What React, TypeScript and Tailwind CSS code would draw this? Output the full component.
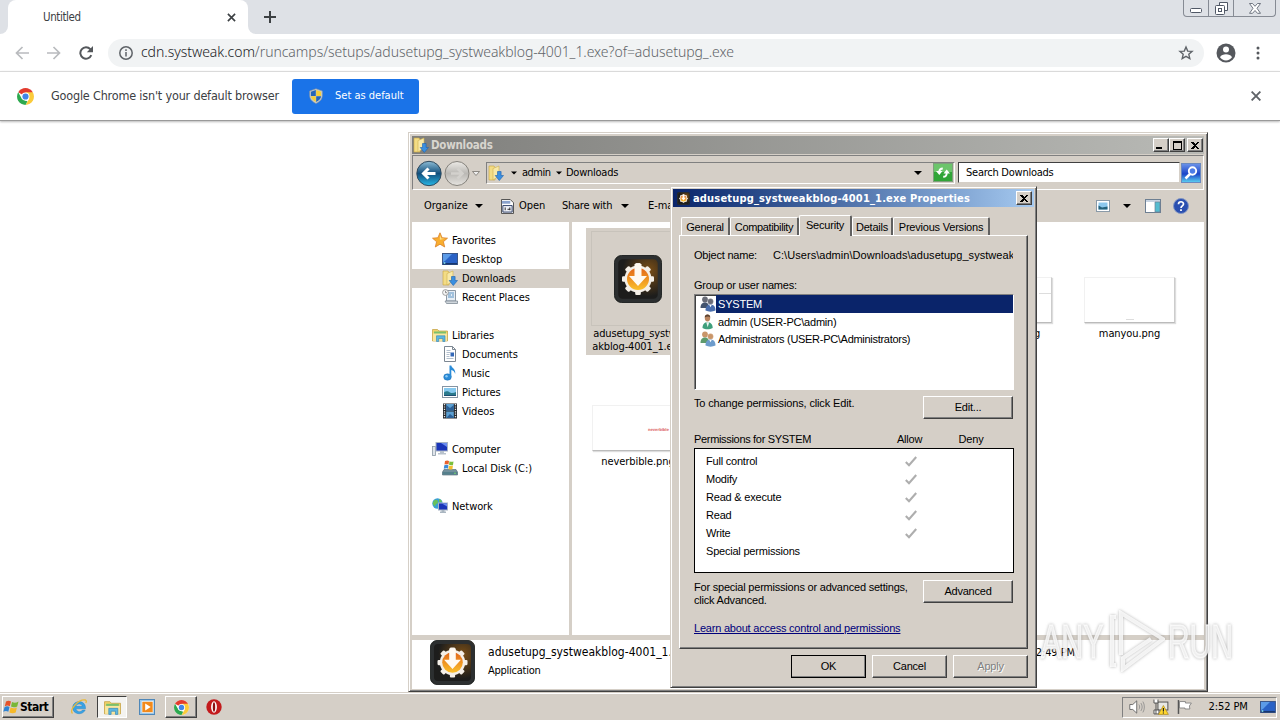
import React from "react";
import type { ReactNode } from "react";

type P = { className?: string };

const raised = "border border-t-white border-l-white border-r-[#404040] border-b-[#404040] shadow-[inset_-1px_-1px_0_#808080] bg-[#d5cfc7]";

function ChromeLogo({ className }: P) {
  return (
    <svg viewBox="0 0 16 16" className={className}>
      <circle cx="8" cy="8" r="8" fill="#fff" />
      <path d="M8 8 1.1 4A8 8 0 0 1 14.9 4Z" fill="#e33b2e" />
      <path d="M8 8V4h6.9A8 8 0 0 1 8 16l3.500-6Z" fill="#fbcb3b" />
      <path d="M1.1 4 4.600 10 8 12l1.800.4L8 16A8 8 0 0 1 1.1 4Z" fill="#2da94f" />
      <circle cx="8" cy="8" r="3.800" fill="#fff" />
      <circle cx="8" cy="8" r="2.900" fill="#4285e8" />
    </svg>
  );
}

function Shield({ className }: P) {
  return (
    <svg viewBox="0 0 16 16" className={className}>
      <path d="M8 .8 14.300 3v4.500c0 3.600-2.500 6.200-6.300 7.900C4.200 13.700 1.700 11.100 1.700 7.500V3Z" fill="#c9ced2" stroke="#8d959b" strokeWidth=".6" />
      <path d="M7.800 2v6H2.900V3.800Z" fill="#2565b8" />
      <path d="M8.200 2v6h4.900V3.800Z" fill="#f4ce3a" />
      <path d="M7.800 8.300v5.700C5 12.500 3.200 10.800 2.900 8.300Z" fill="#f4ce3a" />
      <path d="M8.200 8.300v5.700c2.800-1.500 4.600-3.200 4.900-5.700Z" fill="#2565b8" />
    </svg>
  );
}

function AppIcon({ className }: P) {
  return (
    <svg viewBox="0 0 48 48" className={className}>
      <defs>
        <radialGradient id="appGlow" cx=".72" cy=".32" r=".55">
          <stop offset="0" stopColor="#7a4e16" />
          <stop offset="1" stopColor="#1d1d1c" />
        </radialGradient>
        <linearGradient id="appFill" x1="0" y1="0" x2="0" y2="1">
          <stop offset="0" stopColor="#e2661a" />
          <stop offset="1" stopColor="#fbc02a" />
        </linearGradient>
      </defs>
      <rect x=".5" y=".5" width="47" height="47" rx="7" fill="url(#appGlow)" stroke="#222625" strokeWidth="1" />
      <rect x="2.500" y="2.500" width="43" height="43" rx="6" fill="none" stroke="#2c2f30" strokeWidth="3.500" />
      <g fill="#f4efe8">
        <circle cx="24" cy="24" r="13.500" />
        {[0, 45, 90, 135].map((a) => (
          <rect key={a} x="21.200" y="8" width="5.600" height="32" rx="1.200" transform={`rotate(${a} 24 24)`} />
        ))}
      </g>
      <circle cx="24" cy="24" r="11" fill="url(#appFill)" />
      <path d="M20.500 9h7v12h5.500L24 31l-9-10h5.500Z" fill="#fffaf2" />
    </svg>
  );
}

function FolderDown({ className }: P) {
  return (
    <svg viewBox="0 0 16 16" className={className}>
      <path d="M1 1h5l1 1.500V15H1Z" fill="#f3dc85" stroke="#c9a63c" strokeWidth=".6" />
      <path d="M5 3.500 11 1v10l-6 4Z" fill="#f8e9a8" stroke="#cfae4a" strokeWidth=".6" />
      <path d="M9.500 6.500h3.600v4h2.400L11.300 15.500 7.200 10.500h2.300Z" fill="#3a8fe0" stroke="#1d62ae" strokeWidth=".6" />
    </svg>
  );
}

function StarIcon({ className }: P) {
  return (
    <svg viewBox="0 0 16 16" className={className}>
      <path d="m8 .8 2.100 4.900 5.400.5-4.100 3.500 1.300 5.300L8 12.200 3.300 15l1.300-5.300L.5 6.200l5.400-.5Z" fill="#f9ae2e" stroke="#d9822b" strokeWidth=".8" />
      <path d="m8 3 1.300 3.500 3.500.3-5 1Z" fill="#fde08a" />
    </svg>
  );
}

function DesktopIcon({ className }: P) {
  return (
    <svg viewBox="0 0 16 16" className={className}>
      <rect x=".5" y="2.500" width="15" height="11" fill="#2a62c6" stroke="#3a5688" />
      <path d="M1 3h9L3 10 1 11Z" fill="#5c9be8" />
      <path d="M1 12h14v1.500H1Z" fill="#17376f" />
      <circle cx="2.500" cy="12" r="1" fill="#7bd0e0" />
    </svg>
  );
}

function RecentIcon({ className }: P) {
  return (
    <svg viewBox="0 0 16 16" className={className}>
      <path d="M4.500 1.500h9V12h-9Z" fill="#e7eef5" stroke="#8d99a5" />
      <path d="M6 4h6M6 6h3m1 0h2M6 8h6" stroke="#5b93c4" />
      <path d="M3 12h12.500v2.500H4.500Z" fill="#cfd6dc" stroke="#808b95" strokeWidth=".8" />
      <circle cx="3.500" cy="3.500" r="2.900" fill="#f6f6f6" stroke="#8b8b8b" strokeWidth=".8" />
      <path d="M3.500 1.800v1.900H5" stroke="#666" strokeWidth=".7" fill="none" />
    </svg>
  );
}

function LibraryIcon({ className }: P) {
  return (
    <svg viewBox="0 0 16 16" className={className}>
      <path d="M.5 2.500h5L7 4h8.500v10H.5Z" fill="#f1d36b" stroke="#c29d3c" strokeWidth=".7" />
      <path d="M2 4.500h12v3H2Z" fill="#7cc06c" />
      <path d="M1 6.500h14V14H1Z" fill="#f9e7a0" />
      <path d="M4.500 14.500V8.800h8.500v5.700h-2.200v-3H6.700v3Z" fill="#5db7e2" stroke="#2f84b5" strokeWidth=".6" />
    </svg>
  );
}

function DocIcon({ className }: P) {
  return (
    <svg viewBox="0 0 16 16" className={className}>
      <path d="M2.500.5h8l3 3v12h-11Z" fill="#fff" stroke="#7c8792" />
      <path d="M10.500.5v3h3" fill="none" stroke="#7c8792" />
      <path d="M4.500 4.500h4M4.500 6.500h4M4.500 8.500h3M4.500 10.500h3M4.500 12.500h7" stroke="#9fb0c2" strokeWidth=".8" />
      <path d="M8.500 6.500h3.500v4H8.500Z" fill="#3468b8" />
    </svg>
  );
}

function MusicIcon({ className }: P) {
  return (
    <svg viewBox="0 0 16 16" className={className}>
      <ellipse cx="5.500" cy="12" rx="3.800" ry="3.200" fill="#2b8cd8" stroke="#1a6cb1" strokeWidth=".5" />
      <path d="M7.500 12V.5h1.800c.4 2.500 4.800 3.500 3.900 8.500-.6-2.200-2-3.400-3.900-3.900V12Z" fill="#2b8cd8" />
      <circle cx="4.500" cy="11.200" r="1.200" fill="#8ecbf5" />
    </svg>
  );
}

function PictureIcon({ className }: P) {
  return (
    <svg viewBox="0 0 16 16" className={className}>
      <rect x=".5" y="2.500" width="15" height="11" fill="#fff" stroke="#8594a3" />
      <rect x="2" y="4" width="12" height="8" fill="#86c9ef" />
      <path d="M2 8.500c3-2 4-1 6 0s4 .5 6-.5v4H2Z" fill="#2a7a8c" />
      <path d="M2 11h12v1H2Z" fill="#1d4e73" />
    </svg>
  );
}

function VideoIcon({ className }: P) {
  return (
    <svg viewBox="0 0 16 16" className={className}>
      <rect x="1" y=".5" width="14" height="15" fill="#26292d" />
      <path d="M2.500 1v14M13.500 1v14" stroke="#e8e8e8" strokeWidth="1.300" strokeDasharray="1.200 1.200" />
      <path d="M4.200 1h7.600v6.500H4.200ZM4.200 8.500h7.600V15H4.200Z" fill="#5b9fd2" />
      <path d="M4.200 2 8 5l3.800-3v5.500H4.200ZM4.200 15l3.800-4 3.800 3v1Z" fill="#2b5f96" />
    </svg>
  );
}

function ComputerIcon({ className }: P) {
  return (
    <svg viewBox="0 0 16 16" className={className}>
      <rect x=".5" y="5.500" width="3" height="9" fill="#dfe4ea" stroke="#8b98a5" strokeWidth=".8" />
      <rect x="4" y="1.500" width="11.500" height="8.500" fill="#1a35b8" stroke="#a7b3c4" />
      <path d="M9 2h6v4Z" fill="#6a8cf0" />
      <path d="M8 10h4v2h2v1.500H6V12h2Z" fill="#b8c2cc" />
    </svg>
  );
}

function DiskIcon({ className }: P) {
  return (
    <svg viewBox="0 0 16 16" className={className}>
      <path d="M2 9.500h12l1.500 2.500v3H.5v-3Z" fill="#72909c" stroke="#4a636d" strokeWidth=".6" />
      <path d="M.8 12h14.400v2.500H.8Z" fill="#55808c" />
      <circle cx="13" cy="13.300" r=".8" fill="#7be06c" />
      <path d="M3 1c2-1 3-.5 4 0L6.500 4.500C5.500 4 4 4 2.500 4.500Z" fill="#e8622d" />
      <path d="M7.500 1.200c1.500.8 2.500.8 4 .2L11 5c-1.500.6-2.500.4-4-.2Z" fill="#7bbf3c" />
      <path d="M2.300 5.200c1.500-.7 3-.7 4.100 0L6 8.800c-1.500-.7-2.800-.5-4.200 0Z" fill="#3b8bd8" />
      <path d="M6.900 5.500c1.500.8 2.600.6 4 .1l-.5 3.600c-1.400.5-2.500.5-4-.2Z" fill="#f4be2c" />
    </svg>
  );
}

function NetworkIcon({ className }: P) {
  return (
    <svg viewBox="0 0 16 16" className={className}>
      <circle cx="5.500" cy="5.500" r="5.200" fill="#3a9fd5" />
      <path d="M2 2.500C4 1 6 2 6 4S3 6 3 8.500C1 7 0 5 2 2.500ZM7 1c2 .5 3 2 3 3H7Z" fill="#69c15a" />
      <rect x="6.500" y="5" width="9" height="7" fill="#1a35b8" stroke="#a7b3c4" />
      <path d="M10 5.500h5v3Z" fill="#6a8cf0" />
      <path d="M9.500 12h3v1.500h1.500V15H8v-1.500h1.500Z" fill="#aab6c1" />
    </svg>
  );
}

function Users({ className, a, b, c }: P & { a: string; b: string; c: string }) {
  return (
    <svg viewBox="0 0 16 16" className={className}>
      <circle cx="5" cy="3.500" r="2.900" fill={a} />
      <path d="M.5 12c0-4 2-5.500 4.500-5.500S9 8 9 12Z" fill={b} />
      <circle cx="10.500" cy="5.500" r="2.900" fill={a} stroke="#ffffff66" strokeWidth=".5" />
      <path d="M5.500 14.500c0-4 2-6 5-6s5 2 5 6c-3 1.500-7 1.500-10 0Z" fill={c} />
      <path d="m9.200 8.800 1.300 2.500 1.300-2.500Z" fill="#fff" />
    </svg>
  );
}

function UserIcon({ className }: P) {
  return (
    <svg viewBox="0 0 16 16" className={className}>
      <ellipse cx="7.500" cy="4" rx="2.700" ry="3.400" fill="#b98560" />
      <path d="M4.700 3.500C4.700 1.500 6 .4 7.500.4s2.800 1.100 2.800 3.100C9 2 6.500 2.500 4.700 3.500Z" fill="#5c4432" />
      <path d="M2.500 14c0-4 2-5.800 5-5.800s5.200 1.800 5.200 5.800c-3 1.700-7.500 1.700-10.200 0Z" fill="#3f9f7c" />
      <path d="m6.200 8.200 1.500 5 1.500-5Z" fill="#e8f5f0" />
    </svg>
  );
}

function WinFlag({ className }: P) {
  return (
    <svg viewBox="0 0 17 16" className={className}>
      <path d="M3 2.500C5 1.200 6.500 1.500 8 2.500L6.800 7.200C5.200 6.200 3.700 6.200 1.800 7.200Z" fill="#e5532a" />
      <path d="M9 3c2 1 4 1 6.500-.5L14.200 7.400c-2.200 1.200-4.200 1.200-6.200.2Z" fill="#79b737" />
      <path d="M1.500 8.200c2-1.200 3.500-1 5-.1L5.300 12.800c-1.500-1-3.200-1-5 0Z" fill="#2f83d3" />
      <path d="M7.600 8.600c2 1 4 1 6.300-.2l-1.200 5c-2.200 1.100-4.200 1-6.300 0Z" fill="#f6b92a" />
    </svg>
  );
}

function Caret({ className }: P) {
  return (
    <svg viewBox="0 0 8 4" className={`h-1 shrink-0 ${className ?? "w-2"}`}>
      <path d="M0 0h8L4 4Z" fill="#000" />
    </svg>
  );
}

function CloseGlyph({ className }: P) {
  return (
    <svg viewBox="0 0 8 7" className={className} shapeRendering="crispEdges">
      <path d="M0 0h2l2 2 2-2h2L5 3.500 8 7H6L4 5 2 7H0l3-3.500Z" fill="#000" />
    </svg>
  );
}

function CaptionButton({ children }: { children: ReactNode }) {
  return <div className={`flex h-[14px] w-4 items-center justify-center ${raised}`}>{children}</div>;
}

function Browser() {
  return (
    <header className="flex h-[122px] shrink-0 flex-col text-[#3c4043]">
      <div className="flex h-[34px] bg-[#dee1e6]">
        <div className="w-2 bg-white"><div className="h-full rounded-br-lg bg-[#dee1e6]" /></div>
        <div className="flex w-60 items-center rounded-t-lg bg-white pl-[35px]">
          <span className="w-[184px] pt-[2px] text-[11.500px] tracking-[-0.4px]">Untitled</span>
          <svg viewBox="0 0 10 10" className="size-[9px]"><path d="m1 1 8 8M9 1 1 9" stroke="#3c4043" strokeWidth="1.800" /></svg>
        </div>
        <div className="w-2 bg-white"><div className="h-full rounded-bl-lg bg-[#dee1e6]" /></div>
        <div className="flex flex-1 items-center pl-2">
          <svg viewBox="0 0 12 12" className="size-3"><path d="M6 0v12M0 6h12" stroke="#3c4043" strokeWidth="2" /></svg>
        </div>
        <div className="mr-1 flex h-[17px] w-[93px] rounded-b border border-t-0 border-[#868b94] text-[#505866]">
          <div className="flex w-[25px] items-end justify-center border-r border-[#868b94] pb-[3px]">
            <svg viewBox="0 0 12 5" className="h-[5px] w-3"><rect x=".5" y=".5" width="11" height="4" rx="1" fill="#fff" stroke="currentColor" /></svg>
          </div>
          <div className="flex w-[25px] items-center justify-center border-r border-[#868b94]">
            <svg viewBox="0 0 13 13" className="size-[13px]"><path d="M4.500 3V.5h8v8H10" fill="#fff" stroke="currentColor" /><rect x=".5" y="3.500" width="9" height="9" rx="1" fill="#fff" stroke="currentColor" /><rect x="3.500" y="6.500" width="3" height="3" fill="none" stroke="currentColor" /></svg>
          </div>
          <div className="flex flex-1 items-center justify-center">
            <svg viewBox="0 0 12 11" className="h-[11px] w-3"><path d="M.5.5h3L6 3.300 8.500.5h3L8 5.300l3.500 5h-3L6 7.500 3.500 10.300h-3L4 5.300Z" fill="#fff" stroke="currentColor" strokeWidth=".8" /></svg>
          </div>
        </div>
      </div>
      <div className="flex h-[37px] items-center bg-white">
        <svg viewBox="0 0 14 14" className="ml-[15px] size-[14px]"><path d="M14 7H1.500M7.500 1l-6 6 6 6" fill="none" stroke="#b9bbbe" strokeWidth="1.700" /></svg>
        <svg viewBox="0 0 14 14" className="ml-[18px] size-[14px]"><path d="M0 7h12.500M6.500 1l6 6-6 6" fill="none" stroke="#b9bbbe" strokeWidth="1.700" /></svg>
        <svg viewBox="0 0 14 14" className="ml-[18px] size-[14px]"><path d="M12.300 9.200A5.700 5.700 0 1 1 11.300 3.200L12 4" fill="none" stroke="#55585c" strokeWidth="2" /><path d="M14 0v6.200H7.800Z" fill="#55585c" /></svg>
        <div className="ml-[15px] flex h-7 w-[1096px] items-center rounded-full bg-[#f1f3f4]">
          <svg viewBox="0 0 14 14" className="ml-[11px] size-[14px]"><circle cx="7" cy="7" r="6.200" fill="none" stroke="#5f6368" strokeWidth="1.500" /><path d="M7 6v4.500M7 3.300v1.600" stroke="#5f6368" strokeWidth="1.500" /></svg>
          <span className="ml-2 w-[1037px] pb-[2px] whitespace-nowrap font-['Noto_Sans',sans-serif] text-[14px] font-light tracking-[-0.045px] text-[#5f6368]">
            <span className="text-[#202124]">cdn.systweak.com</span>/runcamps/setups/adusetupg_systweakblog-4001_1.exe?of=adusetupg_.exe
          </span>
          <svg viewBox="0 0 16 16" className="size-4"><path d="m8 2 1.700 4.100 4.400.3-3.300 2.900 1 4.300L8 11.300l-3.800 2.300 1-4.300L1.900 6.400l4.400-.3Z" fill="none" stroke="#5f6368" strokeWidth="1.400" /></svg>
        </div>
        <svg viewBox="0 0 20 20" className="ml-3 size-5"><circle cx="10" cy="10" r="9.500" fill="#55585d" /><circle cx="10" cy="6.500" r="3" fill="#fff" /><path d="M4 14.200c1-2.200 3.500-3 6-3s5 .8 6 3c-1.300 2-3.500 3.200-6 3.200s-4.700-1.200-6-3.200Z" fill="#fff" /></svg>
        <svg viewBox="0 0 4 14" className="ml-5 h-[14px] w-1" fill="#55585d"><circle cx="2" cy="2" r="1.500" /><circle cx="2" cy="7" r="1.500" /><circle cx="2" cy="12" r="1.500" /></svg>
      </div>
      <div className="flex h-[50px] items-center border-t border-b border-t-[#dadada] border-b-[#9a9a9a] bg-white shadow-[0_1px_2px_#bbb]">
        <ChromeLogo className="ml-[17px] size-[17px]" />
        <span className="ml-[17px] w-[241px] whitespace-nowrap text-[12.500px] tracking-[-0.18px]">Google Chrome isn't your default browser</span>
        <div className="flex h-[35px] w-[127px] items-center rounded-[3px] bg-[#1a73e8] text-white">
          <Shield className="ml-4 size-4" />
          <span className="ml-[11px] whitespace-nowrap text-[11px]">Set as default</span>
        </div>
        <svg viewBox="0 0 10 10" className="mr-[19px] ml-auto size-[10px]"><path d="m.6.6 8.800 8.800M9.400.6.6 9.400" stroke="#5f6368" strokeWidth="1.900" /></svg>
      </div>
    </header>
  );
}

const nav: ([string, (p: P) => ReactNode, boolean] | null)[] = [
  ["Favorites", StarIcon, false],
  ["Desktop", DesktopIcon, true],
  ["Downloads", FolderDown, true],
  ["Recent Places", RecentIcon, true],
  null,
  ["Libraries", LibraryIcon, false],
  ["Documents", DocIcon, true],
  ["Music", MusicIcon, true],
  ["Pictures", PictureIcon, true],
  ["Videos", VideoIcon, true],
  null,
  ["Computer", ComputerIcon, false],
  ["Local Disk (C:)", DiskIcon, true],
  null,
  ["Network", NetworkIcon, false],
];

function Thumb({ children }: { children?: ReactNode }) {
  return <div className="h-[46px] w-[91px] border border-[#f1f1f1] border-r-[#ccc] border-b-[#bbb] bg-white shadow-[1px_1px_1px_#ddd]">{children}</div>;
}

function Explorer() {
  return (
    <section className="absolute top-[132px] left-[408px] flex h-[560px] w-[800px] flex-col border border-[#d5cfc7] border-r-[#404040] border-b-[#404040] bg-[#d5cfc7] p-[2px] text-[11px] tracking-[-0.08px] whitespace-nowrap text-black shadow-[inset_1px_1px_0_#fff,inset_-1px_-1px_0_#808080]">
      <div className="mx-px mt-px flex h-[18px] shrink-0 items-center bg-linear-to-r from-[#7f7f7c] to-[#b9bab6] pr-px pl-px">
        <FolderDown className="size-4" />
        <b className="ml-[2px] flex-1 pt-[2px] text-[11.500px] tracking-[-0.25px] text-[#d8d5ce]">Downloads</b>
        <CaptionButton><i className="mt-[6px] mr-1 h-[2px] w-[6px] bg-black" /></CaptionButton>
        <CaptionButton><i className="h-[9px] w-[9px] border border-t-2 border-black" /></CaptionButton>
        <i className="w-[2px]" />
        <CaptionButton><CloseGlyph className="h-[7px] w-2" /></CaptionButton>
      </div>
      <div className="mx-px mt-px flex h-[35px] shrink-0 items-center border border-[#808080] border-r-white border-b-white">
        <svg viewBox="0 0 68 28" className="ml-[3px] h-7 w-[68px]">
          <defs>
            <linearGradient id="backBlue" x1="0" y1="0" x2="0" y2="1"><stop offset="0" stopColor="#8dbdd6" /><stop offset=".5" stopColor="#124f7c" /><stop offset="1" stopColor="#27b8e8" /></linearGradient>
            <linearGradient id="fwdGray" x1="0" y1="0" x2="0" y2="1"><stop offset="0" stopColor="#eceae6" /><stop offset=".5" stopColor="#bab8b4" /><stop offset="1" stopColor="#e6e4e0" /></linearGradient>
          </defs>
          <circle cx="13" cy="14.500" r="12.200" fill="url(#backBlue)" stroke="#30495c" />
          <path d="M19.500 14.500H8M12.500 9.500l-5 5 5 5" fill="none" stroke="#fff" strokeWidth="3" />
          <circle cx="41" cy="14.500" r="12" fill="url(#fwdGray)" stroke="#85827c" />
          <path d="M35 14.500h11M41.500 9.500l5 5-5 5" fill="none" stroke="#d3d1cd" strokeWidth="2.500" />
          <path d="M56.500 12.500h7L60 16.500Z" fill="#eee" stroke="#77736c" strokeWidth=".8" />
        </svg>
        <div className="ml-[2px] flex h-[22px] w-[469px] items-center border border-[#808080] border-r-white border-b-white">
          <FolderDown className="ml-[1px] size-4" />
          <Caret className="ml-[7px] w-[6px]" />
          <span className="ml-[5px] w-[34px] pt-px tracking-[-0.5px]">admin</span>
          <Caret className="w-[6px]" />
          <span className="ml-1 flex-1 pt-px tracking-[-0.25px]">Downloads</span>
          <Caret />
          <svg viewBox="0 0 20 19" className="mr-px ml-[11px] h-[19px] w-5">
            <rect x=".5" y=".5" width="19" height="18" fill="#31a537" stroke="#7f9f7c" />
            <rect x="1" y="1" width="18" height="8" fill="#6cc56b" />
            <path d="M3 8h6.500L6.300 12ZM10.500 10.500H17L13.700 6.500Z" fill="#fff" />
            <path d="M6.300 9c0-2 1-3.500 3.500-3.500M13.700 10c0 2.500-1 3.800-3.500 3.800" fill="none" stroke="#fff" strokeWidth="1.900" />
          </svg>
        </div>
        <div className="ml-[3px] flex h-[21px] w-[222px] items-center border border-t-[#404040] border-l-[#404040] border-r-[#d5cfc7] border-b-[#d5cfc7] bg-white pt-[2px] pl-[7px] tracking-[-0.25px]">Search Downloads</div>
        <svg viewBox="0 0 20 20" className="ml-px size-5">
          <defs><linearGradient id="srch" x1="0" y1="0" x2="0" y2="1"><stop offset="0" stopColor="#6d94ea" /><stop offset=".55" stopColor="#1b45c8" /><stop offset="1" stopColor="#5cd3f2" /></linearGradient></defs>
          <rect x=".5" y=".5" width="19" height="19" fill="url(#srch)" stroke="#6a89c0" />
          <circle cx="11.500" cy="8" r="3.700" fill="#4d7ce6" stroke="#fff" strokeWidth="1.900" />
          <path d="M9 11 4.500 15.500" stroke="#fff" strokeWidth="2.500" />
        </svg>
      </div>
      <div className="flex h-8 shrink-0 items-center pl-[13px]">
        <span className="w-[51px] pt-px">Organize</span><Caret />
        <svg viewBox="0 0 14 16" className="ml-[18px] h-[15px] w-[13px]"><path d="M.5.500H10l3.500 3.500V15.500H.5Z" fill="#fff" stroke="#444" /><path d="M1 2h9v3H1Z" fill="#8aa2cc" /><path d="M2 7h10v7H2Z" fill="#eef1f8" stroke="#26375f" /><path d="M4.500 9v3M7 11h3M9.500 9v3" stroke="#222" /></svg>
        <span className="ml-[5px] w-[43px] pt-px">Open</span>
        <span className="w-[59px] pt-px tracking-[-0.25px]">Share with</span><Caret />
        <span className="ml-[19px] flex-1 pt-px">E-mail</span>
        <svg viewBox="0 0 14 12" className="h-3 w-[14px]"><rect x=".5" y=".5" width="13" height="11" fill="#fff" stroke="#8a9aa8" /><path d="M2.500 2.500h9v7h-9Z" fill="#8cc8ee" /><path d="M2.500 5.500 6 7.500l5.500-1v3h-9Z" fill="#24627c" /></svg>
        <Caret className="ml-[13px] w-2" />
        <svg viewBox="0 0 16 14" className="ml-[14px] h-[14px] w-4"><rect x=".5" y=".5" width="15" height="13" fill="#fff" stroke="#6d7f92" /><path d="M1 1h14v2H1Z" fill="#c8d4e2" /><path d="M10 3h5v10h-5Z" fill="#54bcd0" stroke="#6d7f92" strokeWidth=".7" /></svg>
        <svg viewBox="0 0 16 16" className="mr-4 ml-3 size-4"><circle cx="8" cy="8" r="7.500" fill="#2a4fb0" stroke="#8296c4" /><path d="M5.500 6.200C5.500 3 10.500 3 10.500 6c0 1.900-2.500 1.800-2.500 4" fill="none" stroke="#fff" strokeWidth="1.700" /><path d="M7.100 11.200h1.800V13H7.100Z" fill="#fff" /></svg>
      </div>
      <div className="ml-px flex h-[413px] w-[792px] shrink-0 bg-white">
        <nav className="flex w-[157px] flex-col pt-[9px]">
          {nav.map((row, i) => {
            if (!row) return <div key={i} className="h-[19px]" />;
            const [label, Icon, child] = row;
            return (
              <div key={label} className={`flex h-[19px] items-center ${child ? "pl-[30px]" : "pl-5"} ${label === "Downloads" ? "bg-[#d5cfc7]" : ""}`}>
                <Icon className="mr-1 mb-[2px] size-4" /><span className="pt-[2px]">{label}</span>
              </div>
            );
          })}
        </nav>
        <div className="w-[3px] bg-[#d5cfc7]" />
        <div className="grid auto-rows-[128px] grid-cols-[repeat(5,123px)] content-start overflow-hidden pt-[6px] pl-1 text-center leading-[13px]">
          <div className="ml-[10px] flex h-[127px] w-[104px] flex-col items-center bg-[#d5cfc7]">
            <div className="mt-[3px] flex h-[95px] w-[94px] items-center justify-center border border-[#c8c3bb]"><AppIcon className="size-12" /></div>
            <div className="mt-px tracking-[-0.15px]">adusetupg_systwe<br />akblog-4001_1.exe</div>
          </div>
          <div /><div />
          <div className="flex flex-col items-center pt-[49px]"><Thumb><div className="mt-[15px] ml-auto h-px w-3 bg-[#ddd]" /></Thumb><span className="mt-1">lakelower.png</span></div>
          <div className="flex flex-col items-center pt-[49px]"><Thumb><div className="mx-auto mt-[41px] h-px w-2 bg-[#ddd]" /></Thumb><span className="mt-1">manyou.png</span></div>
          <div className="flex flex-col items-center pt-[49px]"><Thumb><div className="mt-[19px] ml-[55px] text-left text-[4px] leading-[10px] font-bold text-[#e07070]">neverbible</div></Thumb><span className="mt-1 ml-px">neverbible.png</span></div>
        </div>
      </div>
      <div className="h-[5px] shrink-0" />
      <div className="mx-px flex flex-1 bg-white">
        <AppIcon className="ml-[18px] size-[45px]" />
        <div className="ml-[13px] flex flex-col pt-[5px] leading-[14px]">
          <span className="text-[12px] tracking-[0.02px]">adusetupg_systweakblog-4001_1.exe</span>
          <span className="mt-[5px] tracking-[-0.25px]">Application</span>
        </div>
        <span className="mr-[129px] ml-auto pt-[5px]">Date modified: 2:49 PM</span>
      </div>
    </section>
  );
}

function PushButton({ children, className }: P & { children: ReactNode }) {
  return <div className={`flex h-[23px] items-center justify-center ${raised} ${className ?? ""}`}>{children}</div>;
}

function Tab({ children, className }: P & { children: ReactNode }) {
  return <div className={`flex items-center justify-center rounded-t-[2px] border-t border-r-2 border-l border-t-white border-r-[#606060] border-l-white pt-px ${className ?? ""}`}>{children}</div>;
}

function Properties() {
  return (
    <section className="absolute top-[186px] left-[670px] flex h-[502px] w-[367px] flex-col border border-[#d5cfc7] border-r-[#404040] border-b-[#404040] bg-[#d5cfc7] p-[2px] font-['Liberation_Sans',Arial,sans-serif] text-[11px] leading-[13px] tracking-[-0.21px] whitespace-nowrap text-black shadow-[inset_1px_1px_0_#fff,inset_-1px_-1px_0_#808080]">
      <div className="flex h-[18px] shrink-0 items-center bg-linear-to-r from-[#0a246a] to-[#a6caf0] pr-[2px] pl-1 font-['DejaVu_Sans_Condensed','DejaVu_Sans',sans-serif] text-white">
        <AppIcon className="size-[13px]" />
        <b className="ml-[3px] flex-1 text-[11px] tracking-[0.17px]">adusetupg_systweakblog-4001_1.exe Properties</b>
        <CaptionButton><CloseGlyph className="h-[7px] w-2" /></CaptionButton>
      </div>
      <div className="mt-2 ml-[8px] flex h-5 items-end">
        <Tab className="h-[18px] w-[49px]">General</Tab>
        <Tab className="h-[18px] w-[69px] tracking-[-0.35px]">Compatibility</Tab>
        <Tab className="z-10 -mb-px h-[21px] w-[53px] bg-[#d5cfc7] pb-[3px]">Security</Tab>
        <Tab className="h-[18px] w-[41px]">Details</Tab>
        <Tab className="h-[18px] w-[97px] border-r-1">Previous Versions</Tab>
      </div>
      <div className="ml-[6px] flex h-[414px] w-[349px] flex-col border border-white border-r-[#404040] border-b-[#404040] pl-[14px] shadow-[inset_-1px_-1px_0_#808080]">
        <div className="mt-[13px] flex"><span className="w-[79px]">Object name:</span><span className="w-[240px] overflow-hidden tracking-[0.05px]">C:\Users\admin\Downloads\adusetupg_systweakblog</span></div>
        <div className="mt-[17px]">Group or user names:</div>
        <div className="mt-[2px] h-24 w-[320px] border border-[#808080] border-r-white border-b-white bg-white pl-px shadow-[inset_1px_1px_0_#404040]">
          <div className="flex h-[18px] items-center pl-1"><Users className="size-4" a="#6a6d78" b="#44546e" c="#4a6fae" /><span className="flex h-[18px] w-[297px] items-center bg-[#0a246a] pt-px pl-[2px] text-white">SYSTEM</span></div>
          <div className="flex h-[17px] items-center pl-1"><UserIcon className="size-4" /><span className="ml-[2px] pt-px">admin (USER-PC\admin)</span></div>
          <div className="flex h-[17px] items-center pl-1"><Users className="size-4" a="#c9966a" b="#5e9a6d" c="#6d9ccc" /><span className="ml-[2px] pt-px tracking-[-0.29px]">Administrators (USER-PC\Administrators)</span></div>
        </div>
        <div className="mt-[6px] flex items-start"><span className="mt-px w-[229px] tracking-[-0.14px]">To change permissions, click Edit.</span><PushButton className="w-[90px]">Edit...</PushButton></div>
        <div className="mt-[14px] flex"><span className="w-[185px] tracking-[-0.32px]">Permissions for SYSTEM</span><span className="w-[61px] text-center">Allow</span><span className="w-[62px] text-center">Deny</span></div>
        <div className="mt-[2px] h-[125px] w-[320px] border border-black bg-white pt-[3px] pl-[11px]">
          {["Full control", "Modify", "Read & execute", "Read", "Write", "Special permissions"].map((p, i) => (
            <div key={p} className="flex h-[18px] items-center"><span className="w-[199px]">{p}</span>{i < 5 && <svg viewBox="0 0 12 11" className="h-[11px] w-3"><path d="M.8 6 4 9.200 11.200 1" fill="none" stroke="#aeaeae" strokeWidth="2.100" /></svg>}</div>
          ))}
        </div>
        <div className="mt-[7px] flex items-start"><span className="mt-px w-[229px]">For special permissions or advanced settings,<br />click Advanced.</span><PushButton className="w-[90px]">Advanced</PushButton></div>
        <a className="mt-[15px] text-[#00007b] underline">Learn about access control and permissions</a>
      </div>
      <div className="mt-[6px] flex pl-[118px]">
        <PushButton className="w-[75px] outline outline-black -outline-offset-1">OK</PushButton>
        <PushButton className="ml-[6px] w-[75px]">Cancel</PushButton>
        <PushButton className="ml-[6px] w-[75px] text-[#808080] [text-shadow:1px_1px_0_#fff]">Apply</PushButton>
      </div>
    </section>
  );
}

function Taskbar() {
  return (
    <footer className="flex h-7 shrink-0 items-center border-t border-[#d5cfc7] bg-[#d5cfc7] pt-px pl-[2px] text-[11px] text-black shadow-[inset_0_1px_0_#fff]">
      <div className={`flex h-[22px] w-[52px] items-center ${raised}`}><WinFlag className="h-4 w-[17px]" /><b className="text-[12px] tracking-[-0.5px]">Start</b></div>
      <svg viewBox="0 0 18 18" className="ml-4 size-[18px]"><path d="M15.500 10.800H6c.3 3 4.800 3.900 6.500 1.300H15.200C12.500 18 2.500 16.500 2.700 9.500 2.900 1.700 16.200 1.200 15.500 10.800ZM6 8.300h6.200C11.700 5.200 6.500 5.200 6 8.300Z" fill="#38a2e4" stroke="#1f7cc0" strokeWidth=".4" /><path d="M2.500 15.500C-1 11.500 9 .5 15.500 2c1 .5.800 2 .3 3" fill="none" stroke="#e9b93a" strokeWidth="1.300" /></svg>
      <div className="ml-[9px] flex h-[22px] w-[30px] items-center justify-center border border-t-[#404040] border-l-[#404040] border-r-white border-b-white bg-[#f4f3f0]"><LibraryIcon className="size-[17px]" /></div>
      <svg viewBox="0 0 16 16" className="ml-3 size-4"><rect x=".5" y=".5" width="15" height="15" fill="#9cc8ea" stroke="#4f87b8" /><rect x="3" y="2.500" width="11" height="11" fill="#f28a1c" stroke="#fff" strokeWidth=".6" /><path d="m6.200 4.500 5.500 3.500-5.500 3.500Z" fill="#fff" /></svg>
      <div className={`ml-[10px] flex h-[22px] w-8 items-center justify-center ${raised}`}><ChromeLogo className="size-[15px]" /></div>
      <svg viewBox="0 0 16 16" className="ml-[9px] size-4"><circle cx="8" cy="8" r="7.700" fill="#c31a1c" /><ellipse cx="8" cy="8" rx="2.900" ry="5.800" fill="#fff" /><ellipse cx="8" cy="8" rx="1.200" ry="4.800" fill="#8d0e10" /></svg>
      <div className="mr-[3px] ml-auto flex h-[21px] w-[155px] items-center border border-[#808080] border-r-white border-b-white">
        <svg viewBox="0 0 16 14" className="ml-[6px] h-[14px] w-4"><path d="M.8 4.500h3l4-3.700v12.400l-4-3.700h-3Z" fill="#fff" stroke="#555" strokeWidth=".8" /><path d="M10 4.500c1 1.500 1 3.500 0 5M12 3c1.700 2.500 1.700 5.500 0 8M14 1.500c2 3 2 8 0 11" fill="none" stroke="#888" strokeWidth=".8" /></svg>
        <svg viewBox="0 0 16 16" className="ml-2 size-4"><rect x="5" y="3" width="10" height="8" fill="#e8e8e4" stroke="#555" /><path d="M1 .5v3.500h4V.5M3 4v11M1 11h5v4H1Z" fill="#fff" stroke="#555" /><path d="m10.500 6.500 5 9h-10Z" fill="#ffd72e" stroke="#a17c10" strokeWidth=".6" /><path d="M10.500 9v3.500m0 1v1" stroke="#222" strokeWidth="1.200" /></svg>
        <svg viewBox="0 0 16 14" className="ml-2 h-[14px] w-4"><path d="M1.500 0v14" stroke="#555" strokeWidth="1.500" /><path d="M2.500 1.500h6V3h6l-2 3 .5 3H8V8H2.500Z" fill="#fff" stroke="#777" strokeWidth=".8" /></svg>
        <span className="ml-4 w-[52px] pt-px tracking-[-0.1px]">2:52 PM</span>
        <DesktopIcon className="size-4" />
      </div>
    </footer>
  );
}

function Watermark() {
  return (
    <div className="absolute top-[610px] left-[1041px] flex h-[62px] w-[193px] items-center font-['Liberation_Sans',Arial,sans-serif] text-[49px] leading-none text-white/75 [-webkit-text-stroke:1.500px_#ffffffaa] [filter:drop-shadow(0_0_1.500px_#777a)]">
      <span className="w-[66px] origin-left scale-x-[0.62]">ANY</span>
      <svg viewBox="0 0 58 62" className="h-[62px] w-[58px]" fill="none" stroke="#fff" strokeOpacity=".8"><path d="M9 7H5v48h4" strokeWidth="4" /><path d="M14 45V3l42 26-40 30V48l28-19" strokeWidth="4" /></svg>
      <span className="ml-[3px] w-[65px] origin-left scale-x-[0.61]">RUN</span>
    </div>
  );
}

export default function App() {
  return (
    <div className="relative flex h-[720px] w-[1280px] flex-col overflow-hidden bg-white font-['DejaVu_Sans_Condensed','DejaVu_Sans',sans-serif]">
      <Browser />
      <main className="flex-1" />
      <Taskbar />
      <Explorer />
      <Properties />
      <Watermark />
    </div>
  );
}
